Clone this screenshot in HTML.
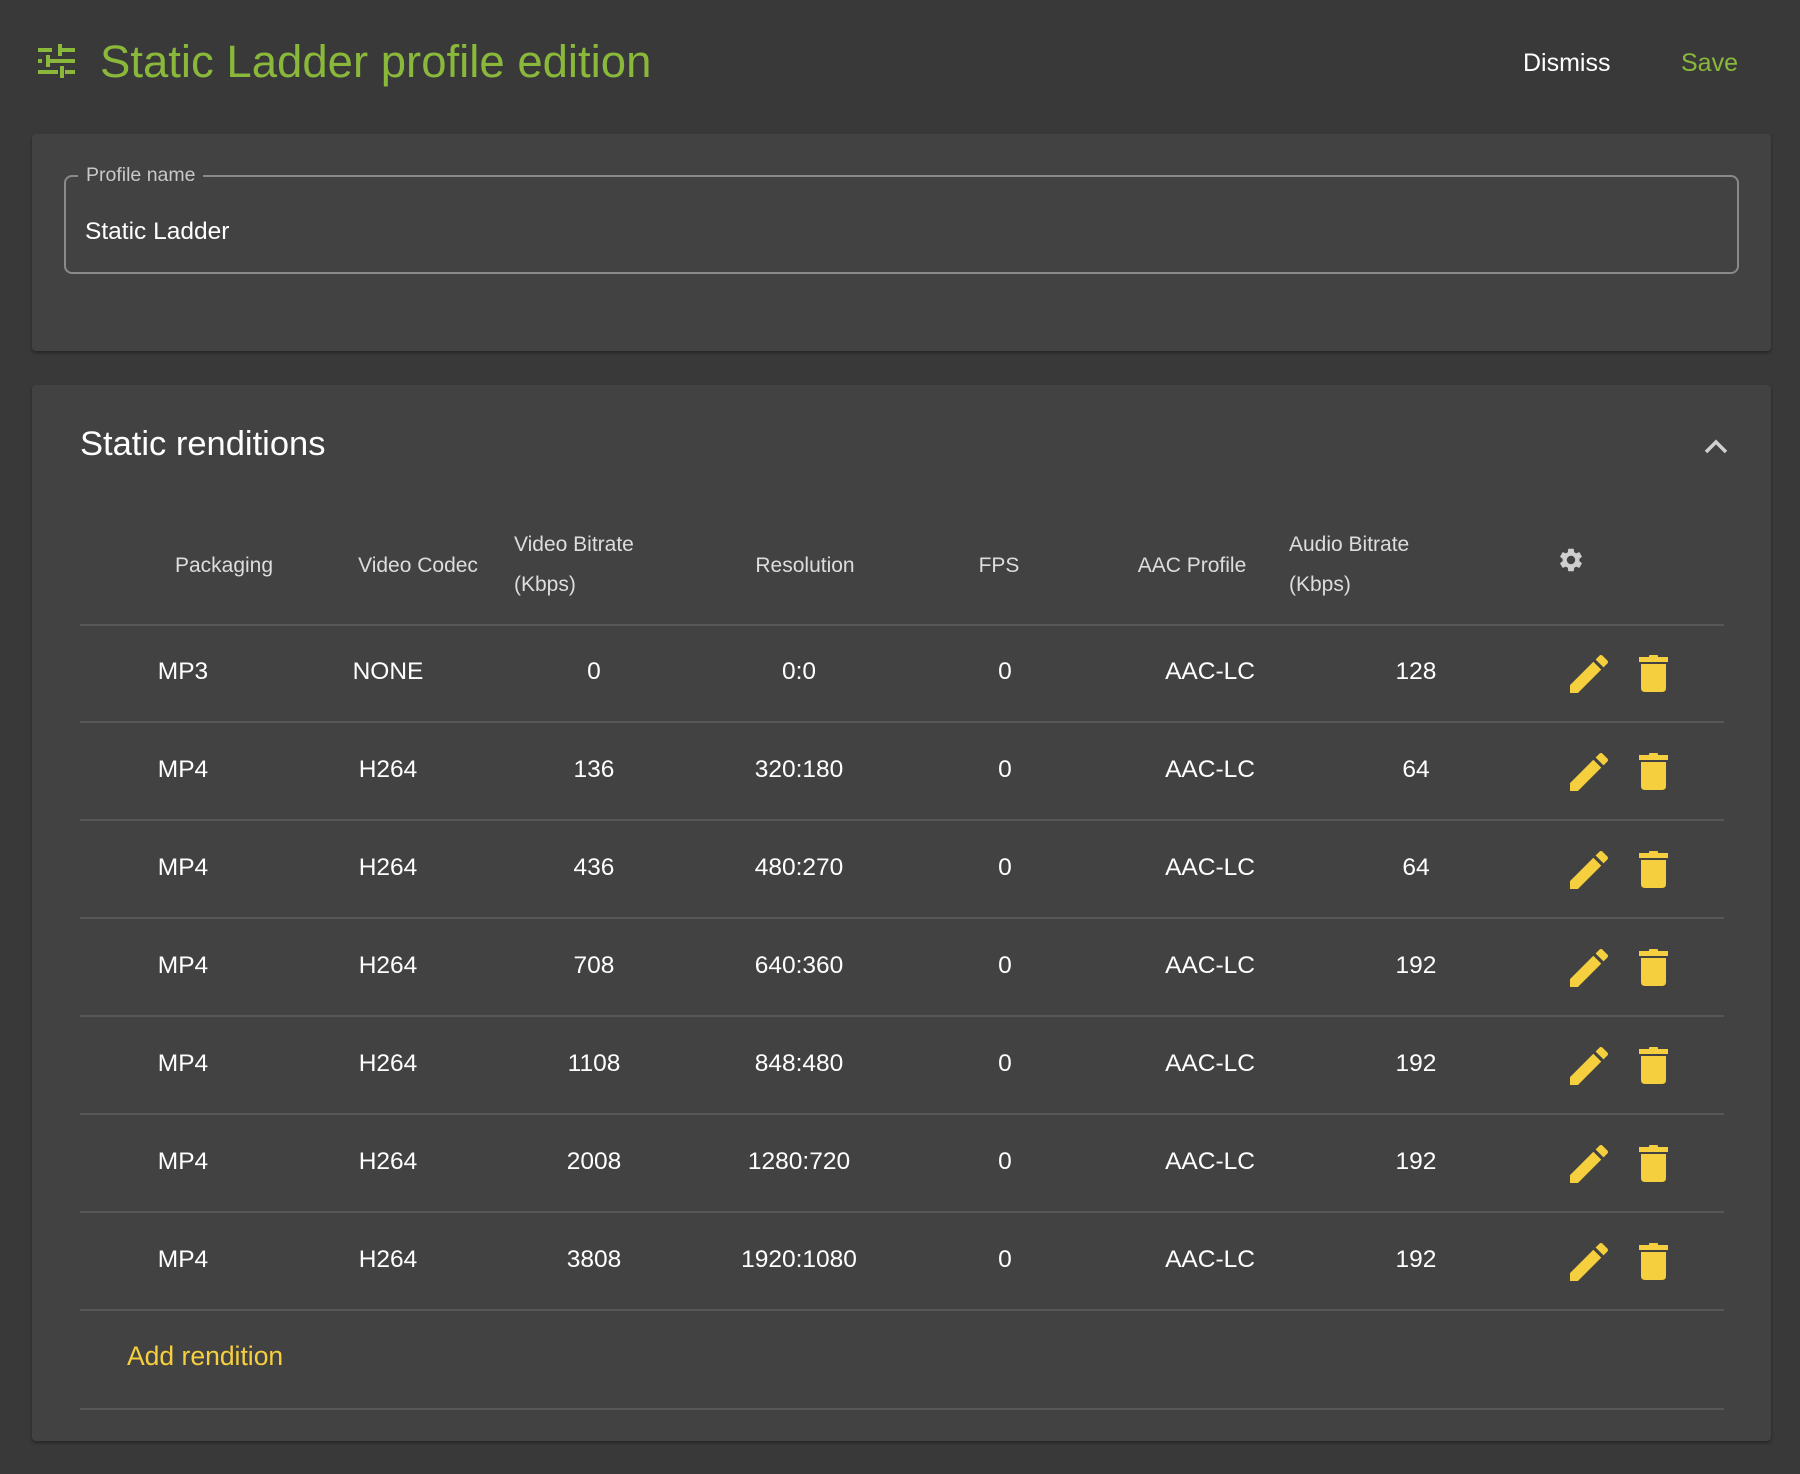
<!DOCTYPE html>
<html><head><meta charset="utf-8"><style>
*{margin:0;padding:0;box-sizing:border-box}
body{width:1800px;height:1474px;background:#393939;font-family:"Liberation Sans",sans-serif;position:relative;overflow:hidden;color:#fff}
.a{position:absolute;white-space:nowrap}
.c{transform:translateX(-50%)}
.card{position:absolute;left:32px;width:1739px;background:#424242;border-radius:4px;box-shadow:0 2px 3px rgba(0,0,0,.35)}
.line{position:absolute;left:80px;width:1644px;height:2px;background:#575757}
.d{font-size:24px;line-height:30px;color:#fff}
.h{font-size:21px;line-height:40px;color:#ddd}
</style></head><body>
<svg class="a" style="left:38px;top:44px" width="37" height="34" viewBox="0 0 37 34" fill="#8ab83a">
<rect x="0" y="4" width="14" height="4"/><rect x="20" y="4" width="17" height="4"/><rect x="20" y="0" width="4" height="12"/>
<rect x="0" y="15" width="4" height="4"/><rect x="8" y="15" width="29" height="4"/><rect x="8" y="11" width="4" height="12"/>
<rect x="0" y="26" width="20" height="4"/><rect x="27" y="26" width="10" height="4"/><rect x="22" y="22" width="4" height="12"/>
</svg>
<div class="a" style="left:100px;top:34px;font-size:45.5px;line-height:56px;color:#8ab83a">Static Ladder profile edition</div>
<div class="a" style="left:1523px;top:48px;font-size:25px;line-height:30px">Dismiss</div>
<div class="a" style="left:1681px;top:48px;font-size:25px;line-height:30px;color:#8ab83a">Save</div>

<div class="card" style="top:134px;height:217px"></div>
<div class="a" style="left:64px;top:175px;width:1675px;height:99px;border:2px solid #8a8a8a;border-radius:8px"></div>
<div class="a" style="left:78px;top:162px;padding:0 8px;background:#424242;font-size:19.5px;line-height:26px;color:#c8c8c8">Profile name</div>
<div class="a" style="left:85px;top:217px;font-size:24.5px;line-height:30px">Static Ladder</div>

<div class="card" style="top:385px;height:1056px"></div>
<div class="a" style="left:80px;top:424px;font-size:34.5px;line-height:40px">Static renditions</div>
<svg class="a" style="left:1702px;top:434px" width="28" height="24" viewBox="0 0 28 24"><path d="M4 18 L14 8 L24 18" stroke="#d0d0d0" stroke-width="3.5" fill="none"/></svg>

<div class="a h c" style="left:224px;top:546px">Packaging</div>
<div class="a h c" style="left:418px;top:546px">Video Codec</div>
<div class="a h" style="left:514px;top:525px">Video Bitrate<br>(Kbps)</div>
<div class="a h c" style="left:805px;top:546px">Resolution</div>
<div class="a h c" style="left:999px;top:546px">FPS</div>
<div class="a h c" style="left:1192px;top:546px">AAC Profile</div>
<div class="a h" style="left:1289px;top:525px">Audio Bitrate<br>(Kbps)</div>
<svg class="a" style="left:1557px;top:546px" width="28" height="28" viewBox="0 0 24 24"><path fill="#cfcfcf" d="M19.14 12.94c.04-.3.06-.61.06-.94s-.02-.64-.07-.94l2.030-1.58a.49.49 0 0 0 .12-.61l-1.92-3.32a.49.49 0 0 0-.59-.22l-2.39.96c-.5-.38-1.03-.7-1.62-.94l-.36-2.54a.48.48 0 0 0-.48-.41h-3.84c-.24 0-.43.17-.47.41l-.36 2.540c-.59.24-1.13.57-1.62.94l-2.39-.96a.48.48 0 0 0-.59.22L2.74 8.87c-.12.21-.08.47.12.61l2.03 1.58c-.05.3-.09.63-.09.94s.02.64.07.94l-2.03 1.58a.49.49 0 0 0-.12.61l1.92 3.32c.12.22.37.29.59.22l2.39-.96c.5.38 1.03.7 1.62.94l.36 2.54c.05.24.24.41.48.41h3.84c.24 0 .44-.17.47-.41l.36-2.54c.59-.24 1.13-.56 1.62-.94l2.39.96c.22.08.47 0 .59-.22l1.92-3.32c.12-.22.07-.47-.12-.61l-2.01-1.58zM12 15.6A3.6 3.6 0 1 1 12 8.4a3.6 3.6 0 0 1 0 7.2z"/></svg>
<div class="line" style="top:624px"></div>

<div id="rows"></div>
<div class="a" style="left:127px;top:1341px;font-size:26.5px;line-height:30px;color:#f5cf3d">Add rendition</div>
<div class="line" style="top:1408px"></div>

<script>
var data=[["MP3","NONE","0","0:0"],["MP4","H264","136","320:180"],["MP4","H264","436","480:270"],["MP4","H264","708","640:360"],["MP4","H264","1108","848:480"],["MP4","H264","2008","1280:720"],["MP4","H264","3808","1920:1080"]];
var ab=["128","64","64","192","192","192","192"];
var xs=[183,388,594,799,1005,1210,1416],h="";
for(var i=0;i<7;i++){var y=672+i*98,r=data[i].concat(["0","AAC-LC",ab[i]]);
for(var j=0;j<7;j++)h+='<div class="a d c" style="left:'+xs[j]+'px;top:'+(y-15)+'px;font-size:24.5px">'+r[j]+'</div>';
h+='<svg class="a" style="left:1570px;top:'+(y-17)+'px" width="38" height="38" viewBox="3 3 18 18"><path fill="#f5cf3d" d="M3 17.25V21h3.75L17.81 9.94l-3.75-3.75L3 17.25zM20.71 7.04a1 1 0 0 0 0-1.41l-2.34-2.34a1 1 0 0 0-1.41 0l-1.83 1.83 3.75 3.75 1.83-1.83z"/></svg>';
h+='<svg class="a" style="left:1639px;top:'+(y-17)+'px" width="29" height="38" viewBox="0 0 29 38"><rect x="0" y="2" width="29" height="5" fill="#f5cf3d"/><rect x="10" y="0" width="9" height="4" rx="1" fill="#f5cf3d"/><path d="M2 9 H27 V33 Q27 37 23 37 H6 Q2 37 2 33 Z" fill="#f5cf3d"/></svg>';
h+='<div class="line" style="top:'+(y+49)+'px"></div>';}
document.getElementById("rows").innerHTML=h;
</script>
</body></html>
